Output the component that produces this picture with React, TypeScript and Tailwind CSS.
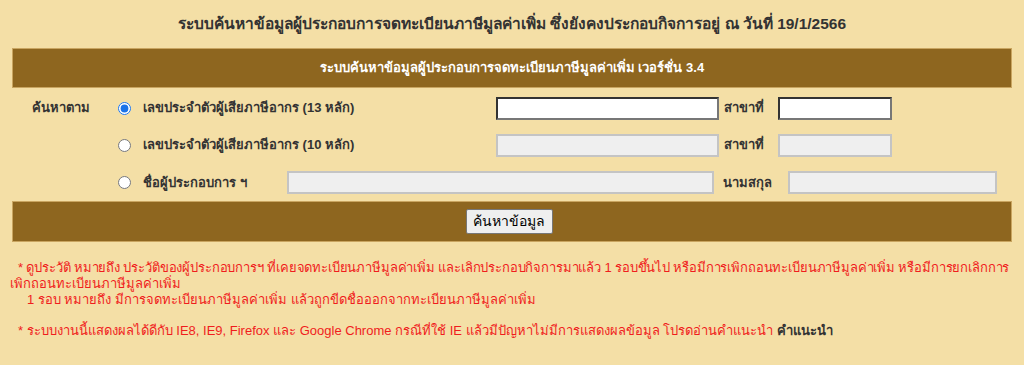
const font = "font-['Tahoma','Liberation_Sans',sans-serif]";

function TextBox({ enabled, className }: { enabled?: boolean; className: string }) {
  return (
    <input
      type="text"
      disabled={!enabled}
      className={
        enabled
          ? `h-[23px] border-2 border-t-[#333] border-l-[#333] border-b-[#777] border-r-[#777] bg-white ${className}`
          : `h-[23px] border-2 border-[#c4c4c4] bg-[#efefef] ${className}`
      }
    />
  );
}

function Radio({ checked }: { checked?: boolean }) {
  return (
    <input
      type="radio"
      name="searchBy"
      defaultChecked={checked}
      className="m-0 h-[13px] w-[13px] accent-[#1a73e8]"
    />
  );
}

export default function App() {
  return (
    <div className={`h-[365px] w-[1024px] overflow-hidden bg-[#f4dfa6] ${font}`}>
      <div className="flex h-[48px] items-center justify-center pb-[1px] text-[15.5px] font-bold text-[#333]">
        ระบบค้นหาข้อมูลผู้ประกอบการจดทะเบียนภาษีมูลค่าเพิ่ม ซึ่งยังคงประกอบกิจการอยู่ ณ วันที่ 19/1/2566
      </div>

      <div className="mx-[12px] flex h-[40px] items-center justify-center border border-[#c9a560] bg-[#8e661f] text-[13px] font-bold text-white">
        ระบบค้นหาข้อมูลผู้ประกอบการจดทะเบียนภาษีมูลค่าเพิ่ม เวอร์ชั่น 3.4
      </div>

      <div className="flex flex-col text-[13px] font-bold text-[#333]">
        <div className="flex h-[38px] items-center pt-[2px]">
          <span className="w-[118px] pl-[32px]">ค้นหาตาม</span>
          <Radio checked />
          <span className="ml-[12px] w-[353px]">เลขประจำตัวผู้เสียภาษีอากร (13 หลัก)</span>
          <TextBox enabled className="w-[223px]" />
          <span className="w-[59px] pl-[5px]">สาขาที่</span>
          <TextBox enabled className="w-[114px]" />
        </div>
        <div className="flex h-[38px] items-center">
          <span className="w-[118px]" />
          <Radio />
          <span className="ml-[12px] w-[353px]">เลขประจำตัวผู้เสียภาษีอากร (10 หลัก)</span>
          <TextBox className="w-[223px]" />
          <span className="w-[59px] pl-[5px]">สาขาที่</span>
          <TextBox className="w-[114px]" />
        </div>
        <div className="flex h-[37px] items-center">
          <span className="w-[118px]" />
          <Radio />
          <span className="ml-[12px] w-[144px]">ชื่อผู้ประกอบการ ฯ</span>
          <TextBox className="w-[427px]" />
          <span className="w-[74px] pl-[9px]">นามสกุล</span>
          <TextBox className="w-[209px]" />
        </div>
      </div>

      <div className="mx-[12px] flex h-[41px] items-center justify-center border border-[#c9a560] bg-[#8e661f]">
        <button className="ml-[-6px] h-[25px] w-[87px] rounded-[2px] border border-[#777] bg-[#efefef] text-[14px] text-black">
          ค้นหาข้อมูล
        </button>
      </div>

      <div className="mt-[18px] pl-[10px] text-[13px] leading-[16px] text-[#f01d1d]">
        <div className="whitespace-nowrap pl-[8px] tracking-[-0.15px]">
          * ดูประวัติ หมายถึง ประวัติของผู้ประกอบการฯ ที่เคยจดทะเบียนภาษีมูลค่าเพิ่ม และเลิกประกอบกิจการมาแล้ว 1 รอบขึ้นไป หรือมีการเพิกถอนทะเบียนภาษีมูลค่าเพิ่ม หรือมีการยกเลิกการ
        </div>
        <div>เพิกถอนทะเบียนภาษีมูลค่าเพิ่ม</div>
        <div className="pl-[17px]">
          1 รอบ หมายถึง มีการจดทะเบียนภาษีมูลค่าเพิ่ม แล้วถูกขีดชื่อออกจากทะเบียนภาษีมูลค่าเพิ่ม
        </div>
        <div className="mt-[15px] pl-[8px]">
          * ระบบงานนี้แสดงผลได้ดีกับ IE8, IE9, Firefox และ Google Chrome กรณีที่ใช้ IE แล้วมีปัญหาไม่มีการแสดงผลข้อมูล โปรดอ่านคำแนะนำ{" "}
          <span className="font-bold text-[#333]">คำแนะนำ</span>
        </div>
      </div>
    </div>
  );
}
